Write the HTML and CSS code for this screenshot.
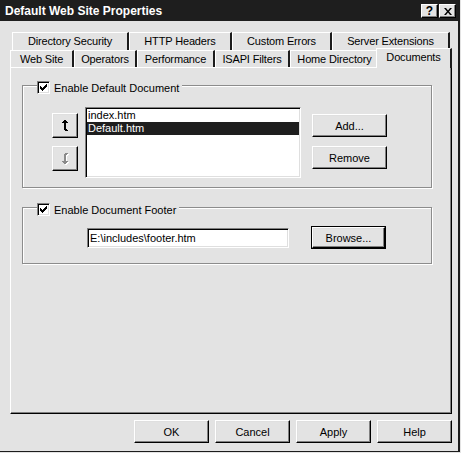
FILE: index.html
```html
<!DOCTYPE html>
<html>
<head>
<meta charset="utf-8">
<link rel="stylesheet" href="styles.css">
</head>
<body>
<div class="window">
  <div class="titlebar">
    <div class="title">Default Web Site Properties</div>
    <div class="tbtns">
      <div class="tbtn q">?</div>
      <div class="tbtn x"><svg width="8" height="7" viewBox="0 0 8 7"><path d="M0 0h2l2 2.5L6 0h2L5 3.5 8 7H6L4 4.5 2 7H0l3-3.5z" fill="#000"/></svg></div>
    </div>
  </div>
  <div class="content">
    <div class="tabrow row1">
      <div class="tab w117">Directory Security</div>
      <div class="tab w103">HTTP Headers</div>
      <div class="tab w100">Custom Errors</div>
      <div class="tab w118">Server Extensions</div>
    </div>
    <div class="tabrow row2">
      <div class="tab w64">Web Site</div>
      <div class="tab w63">Operators</div>
      <div class="tab w78">Performance</div>
      <div class="tab w75">ISAPI Filters</div>
      <div class="tab w88 noright">Home Directory</div>
      <div class="tab sel">Documents</div>
    </div>
    <div class="panel">
      <div class="group g1">
        <div class="legend">
          <span class="check"><svg width="7" height="7" viewBox="0 0 7 7"><path d="M0 2h1v1h1v1h1V3h1V2h1V1h1V0h1v3H6v1H5v1H4v1H3v1H2V6H1V5H0z" fill="#000"/></svg></span>
          <span class="ltext">Enable Default Document</span>
        </div>
        <div class="grow">
          <div class="arrows">
            <div class="btn abtn"><svg width="6" height="11" viewBox="0 0 6 11"><path d="M2 0H4V1H5V2H6V3H4V9H5V10H6V11H3V10H2V3H0V2H1V1H2Z" fill="#000"/></svg></div>
            <div class="btn abtn dis"><svg width="7" height="12" viewBox="0 0 7 12"><path d="M2 11H4V10H5V9H6V8H4V2H5V1H6V0H3V1H2V8H0V9H1V10H2Z" fill="#fff" transform="translate(1 1)"/><path d="M2 11H4V10H5V9H6V8H4V2H5V1H6V0H3V1H2V8H0V9H1V10H2Z" fill="#8a8a8a"/></svg></div>
          </div>
          <div class="list">
            <div class="item">index.htm</div>
            <div class="item selitem">Default.htm</div>
          </div>
          <div class="bcol">
            <div class="btn pbtn">Add...</div>
            <div class="btn pbtn">Remove</div>
          </div>
        </div>
      </div>
      <div class="group g2">
        <div class="legend">
          <span class="check"><svg width="7" height="7" viewBox="0 0 7 7"><path d="M0 2h1v1h1v1h1V3h1V2h1V1h1V0h1v3H6v1H5v1H4v1H3v1H2V6H1V5H0z" fill="#000"/></svg></span>
          <span class="ltext">Enable Document Footer</span>
        </div>
        <div class="grow2">
          <div class="textbox">E:\includes\footer.htm</div>
          <div class="defbtn"><div class="btn pbtn inner">Browse...</div></div>
        </div>
      </div>
    </div>
    <div class="footer">
      <div class="btn pbtn">OK</div>
      <div class="btn pbtn">Cancel</div>
      <div class="btn pbtn">Apply</div>
      <div class="btn pbtn">Help</div>
    </div>
  </div>
</div>
</body>
</html>
```
FILE: styles.css
```css
* { box-sizing: border-box; }
html, body { margin: 0; padding: 0; }
body {
  width: 461px;
  height: 453px;
  overflow: hidden;
  background: #e3e3e3;
  font-family: "Liberation Sans", Arial, sans-serif;
  font-size: 11px;
  color: #000;
}
.window {
  width: 460px;
  height: 452px;
  border-right: 2px solid #1c1c1c;
  border-bottom: 1px solid #1c1c1c;
  display: flex;
  flex-direction: column;
}
.titlebar {
  height: 21px;
  flex: none;
  background: #1e1e1e;
  display: flex;
  justify-content: space-between;
  align-items: flex-start;
  padding-left: 5px;
  padding-right: 2px;
}
.title {
  color: #fff;
  font-weight: bold;
  font-size: 12px;
  line-height: 19px;
  margin-top: 2px;
  white-space: nowrap;
}
.tbtns { display: flex; gap: 1px; margin-top: 4px; }
.tbtn {
  width: 17px;
  height: 14px;
  background: #e3e3e3;
  border: 1px solid;
  border-color: #fff #000 #000 #fff;
  box-shadow: inset -1px -1px #808080;
  display: flex;
  align-items: center;
  justify-content: center;
  font-weight: bold;
  font-size: 12px;
  line-height: 12px;
}
.content {
  flex: 1;
  display: flex;
  flex-direction: column;
  padding-top: 11px;
}
.tabrow { display: flex; flex: none; }
.row1 { margin-left: 12px; height: 18px; }
.row2 { margin-left: 10px; height: 17px; }
.tab {
  height: 100%;
  border-top: 1px solid #fff;
  border-left: 1px solid #fff;
  border-right: 2px solid #1c1c1c;
  text-align: center;
  line-height: 17px;
  white-space: nowrap;
  letter-spacing: -0.15px;
}
.w117 { width: 117px; }
.w103 { width: 103px; }
.w100 { width: 100px; }
.w118 { width: 118px; }
.w64 { width: 64px; }
.w63 { width: 63px; }
.w78 { width: 78px; }
.w75 { width: 75px; }
.w88 { width: 88px; }
.noright { border-right: none; }
.tab.sel {
  width: 76px;
  height: 20px;
  margin-left: -2px;
  margin-top: -2px;
  position: relative;
  z-index: 2;
  background: #e3e3e3;
}
.panel {
  flex: none;
  margin-left: 10px;
  width: 442px;
  height: 347px;
  border: 1px solid;
  border-color: #fff #000 #000 #fff;
  box-shadow: inset -1px -1px #808080;
  padding-left: 11px;
  padding-top: 17px;
}
.group {
  width: 410px;
  border: 1px solid #8c8c8c;
  box-shadow: 1px 1px #fff, inset 1px 1px #fff;
}
.g1 { padding-bottom: 9px; }
.g2 { margin-top: 19px; padding-bottom: 14px; }
.legend {
  display: flex;
  align-items: flex-start;
  width: max-content;
  margin-left: 14px;
  margin-top: -5px;
  padding-right: 3px;
  background: #e3e3e3;
  height: 13px;
}
.check {
  width: 13px;
  height: 13px;
  background: #fff;
  border: 1px solid;
  border-color: #808080 #fff #fff #808080;
  box-shadow: inset 1px 1px #000, inset -1px -1px #dfdfdf;
  display: flex;
  align-items: center;
  justify-content: center;
}
.ltext {
  margin-left: 4px;
  line-height: 13px;
  padding-top: 1px;
  white-space: nowrap;
}
.grow { display: flex; align-items: flex-start; margin-top: 13px; }
.arrows {
  margin-left: 29px;
  margin-top: 6px;
  display: flex;
  flex-direction: column;
  gap: 8px;
}
.btn {
  background: #e3e3e3;
  border: 1px solid;
  border-color: #fff #000 #000 #fff;
  box-shadow: inset -1px -1px #808080, inset 1px 1px #dfdfdf;
  display: flex;
  align-items: center;
  justify-content: center;
  white-space: nowrap;
}
.abtn { width: 26px; height: 25px; }
.list {
  margin-left: 7px;
  width: 216px;
  height: 71px;
  background: #fff;
  border: 1px solid;
  border-color: #808080 #fff #fff #808080;
  box-shadow: inset 1px 1px #000, inset -1px -1px #dfdfdf;
  padding: 1px;
}
.item {
  height: 13px;
  line-height: 13px;
  padding-left: 1px;
}
.selitem { background: #1e1e1e; color: #fff; }
.bcol {
  margin-left: 11px;
  margin-top: 7px;
  display: flex;
  flex-direction: column;
  gap: 9px;
}
.pbtn { width: 75px; height: 23px; }
.grow2 { display: flex; align-items: flex-start; margin-top: 10px; }
.textbox {
  margin-left: 64px;
  margin-top: 2px;
  width: 202px;
  height: 20px;
  background: #fff;
  border: 1px solid;
  border-color: #808080 #fff #fff #808080;
  box-shadow: inset 1px 1px #000, inset -1px -1px #dfdfdf;
  padding-left: 2px;
  line-height: 18px;
  white-space: nowrap;
}
.defbtn {
  margin-left: 22px;
  border: 1px solid #000;
}
.defbtn .inner { width: 73px; height: 21px; }
.footer {
  display: flex;
  justify-content: flex-end;
  gap: 6px;
  margin-top: 6px;
  padding-right: 6px;
}
```
